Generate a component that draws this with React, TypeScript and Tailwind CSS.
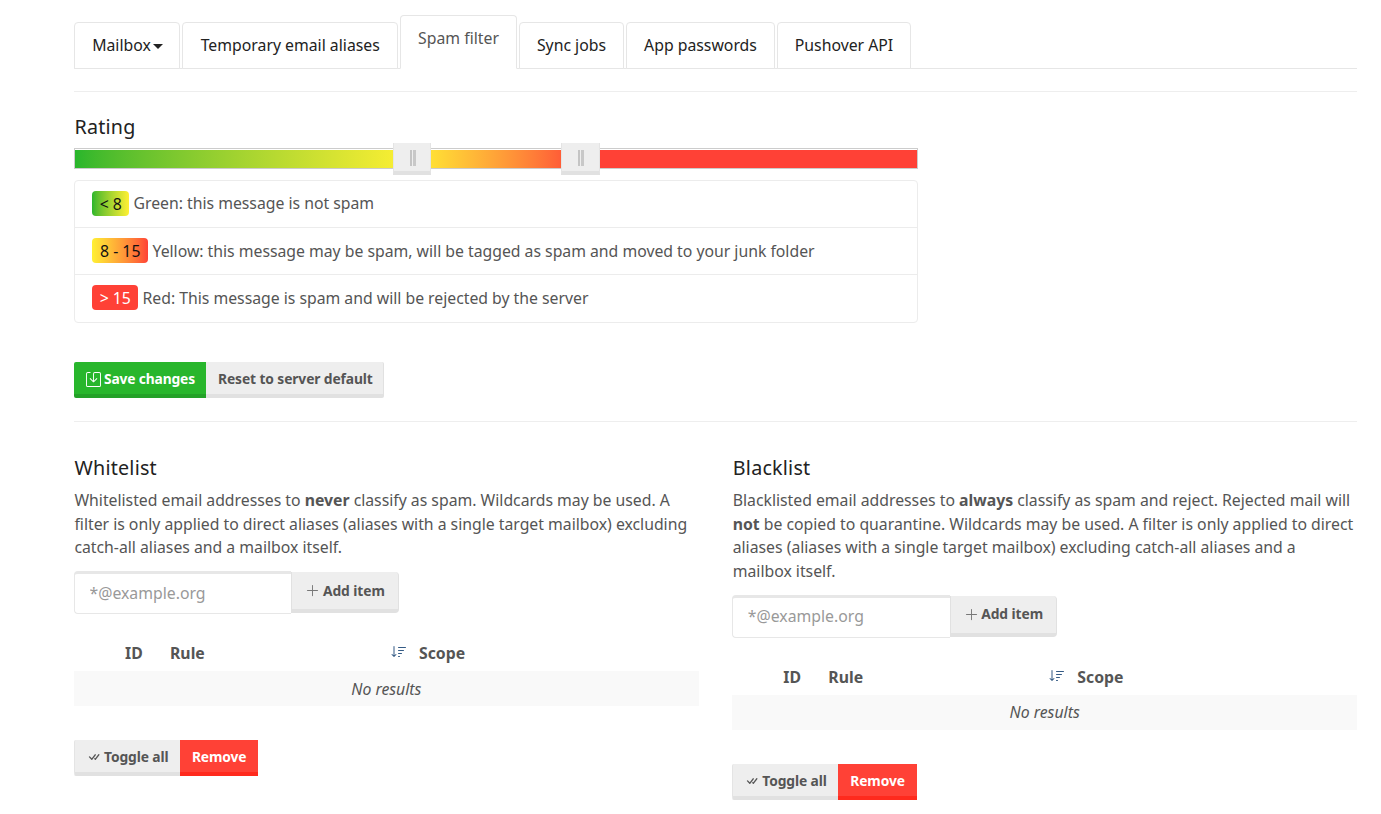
import React from "react";
import { BsCheckAll, BsPlusLg, BsSave, BsSortDown } from "react-icons/bs";

const tabs = [
  { label: "Mailbox", width: "w-[106px] pl-px", caret: true },
  { label: "Temporary email aliases", width: "ml-[2px] w-[216px] pl-[0.5px]" },
  { label: "Spam filter", width: "ml-[2px] w-[117px]", active: true },
  { label: "Sync jobs", width: "ml-[2px] w-[105px]" },
  { label: "App passwords", width: "ml-[2px] w-[149px]" },
  { label: "Pushover API", width: "ml-[2px] w-[134px]" },
];

function Tabs() {
  return (
    <nav className="flex h-[54px] items-end border-b border-[#e6e6e6]">
      {tabs.map((t) => (
        <button
          key={t.label}
          className={`${t.width} -mb-px flex shrink-0 items-start justify-center rounded-t-[4px] border bg-white pt-[10px] ${
            t.active
              ? "h-[54px] border-[#e6e6e6] border-b-white text-[#555]"
              : "h-[47px] border-[#e6e6e6] text-[#222]"
          }`}
        >
          {t.label}
          {t.caret && (
            <span className="ml-[2px] mt-[10.5px] border-x-[5px] border-t-[5px] border-x-transparent border-t-[#222]" />
          )}
        </button>
      ))}
    </nav>
  );
}

function Handle({ place }: { place: string }) {
  return (
    <div className={`absolute -top-[6px] ${place} flex h-8 border-x border-b-4 border-x-[#e4e4e4] border-b-[#e1e1e1] bg-[#eee] pl-[16px] pt-[7px]`}>
      <div className="flex h-4 w-[6px] gap-px">
        <span className="w-[2px] bg-[#c4c4c4]" />
        <span className="w-[3px] bg-[#c8c8c8]" />
      </div>
    </div>
  );
}

const ratings = [
  { range: "< 8", text: "Green: this message is not spam", row: "h-[46px]", tag: "w-[37px] bg-linear-to-r from-[#28b62c] to-[#fff033] text-[#111]" },
  { range: "8 - 15", text: "Yellow: this message may be spam, will be tagged as spam and moved to your junk folder", row: "h-[47px] border-t", tag: "w-[56px] bg-linear-to-r from-[#fff033] to-[#ff4136] text-[#111]" },
  { range: "> 15", text: "Red: This message is spam and will be rejected by the server", row: "h-[48px] border-t", tag: "w-[46px] bg-[#ff4136] text-white" },
];

function Rating() {
  return (
    <section className="w-[844px]">
      <h4 className="mt-[21px] h-[28px] pl-[0.5px] text-[19.7px] leading-[28px] tracking-[0.2px] text-[#222]">Rating</h4>
      <div className="relative mt-[7px] h-[21px] border border-[#ccc]">
        <div className="mt-px flex h-[18px]">
          <div className="w-[337px] bg-linear-to-r from-[#28b62c] to-[#fff033]" />
          <div className="w-[169px] bg-linear-to-r from-[#fff033] to-[#ff4136]" />
          <div className="flex-1 bg-[#ff4136]" />
        </div>
        <Handle place="left-[318px] w-[38px]" />
        <Handle place="left-[486px] w-[39px]" />
      </div>
      <ul className="mt-[11px] h-[143px] rounded-[4px] border border-[#ececec]">
        {ratings.map((r, i) => (
          <li key={r.range} className={`flex items-start border-[#ececec] pl-[17px] pt-[10px] ${r.row}`}>
            <span className={`${r.tag} mr-[4.5px] h-[25px] rounded-[4px] pl-[0.5px] text-center leading-[27px]`}>{r.range}</span>
            <span className={`leading-6 tracking-[-0.015px] ${i > 0 ? "pt-[0.5px]" : ""}`}>{r.text}</span>
          </li>
        ))}
      </ul>
    </section>
  );
}

const btn = "flex h-9 items-center border-b-4 pt-[2px] text-[13.8px] font-bold";
const grey = "border-b-[#e1e1e1] bg-[#eee] text-[#555]";

type ListProps = { title: string; children: React.ReactNode };

function FilterList({ title, children }: ListProps) {
  return (
    <section className="w-[624.7px]">
      <h4 className="h-[28px] pl-[0.5px] text-[19.7px] leading-[28px] tracking-[0.22px] text-[#222]">{title}</h4>
      <p className="mt-[6.9px] whitespace-nowrap pl-[0.4px] leading-[23.65px] tracking-[-0.01px]">{children}</p>
      <div className="mt-[11.2px] flex">
        <input
          className="h-[43px] w-[217.4px] rounded-l-[4px] border border-r-0 border-t-[3px] border-[#e7e7e7] pb-[2px] pl-[14.5px] text-[15.8px] outline-none placeholder:text-[#999]"
          placeholder="*@example.org"
        />
        <button className="mt-px flex h-[41px] w-[107.2px] items-center rounded-r-[4px] border border-b-4 border-t-0 border-[#e1e1e1] bg-[#eee] pl-[13px] text-[13.8px] font-bold tracking-[-0.06px] text-[#555]">
          <BsPlusLg className="mr-[2.5px] size-[15px] text-[#777]" />
          Add item
        </button>
      </div>
      <table className="mt-[21px] w-full table-fixed">
        <thead>
          <tr className="h-[36px] text-left font-semibold text-[#555]">
            <th className="w-[43px] p-0" />
            <th className="w-[45px] p-0 pl-[8px]">ID</th>
            <th className="w-[249px] p-0 pl-[8px]">
              <div className="flex items-center justify-between">
                Rule
                <BsSortDown className="mb-[2px] mr-[4.5px] size-[16px] text-[#345b85]" />
              </div>
            </th>
            <th className="p-0 pl-[8px]">Scope</th>
          </tr>
        </thead>
        <tbody>
          <tr className="h-[35px] bg-[#f9f9f9]">
            <td colSpan={4} className="p-0 pt-[0.5px] text-center italic">No results</td>
          </tr>
        </tbody>
      </table>
      <div className="mt-[34px] flex">
        <button className={`${btn} ${grey} w-[106px] rounded-l-[2px] border-l border-l-[#e4e4e4] pl-[12px] tracking-[-0.1px]`}>
          <BsCheckAll className="mr-[3px] size-[14px]" />
          Toggle all
        </button>
        <button className={`${btn} w-[78.4px] justify-center border-b-[#ff2a1d] bg-[#ff4136] tracking-[-0.1px] text-white`}>Remove</button>
      </div>
    </section>
  );
}

export default function App() {
  return (
    <main className="h-[814px] w-[1381px] overflow-hidden bg-white pl-[74px] pr-6 pt-[15px] font-['Noto_Sans',sans-serif] text-[15.8px] leading-6 text-[#555]">
      <Tabs />
      <div className="mt-[22px] h-px bg-[#eee]" />
      <Rating />
      <div className="mt-[39px] flex">
        <button className={`${btn} w-[132px] rounded-l-[2px] border-b-[#23a127] bg-[#28b62c] pl-3 tracking-[-0.15px] text-white`}>
          <BsSave className="mr-[3px] size-[15px]" />
          Save changes
        </button>
        <button className={`${btn} ${grey} w-[178px] rounded-r-[2px] border-r border-r-[#e1e1e1] pl-3 tracking-[-0.1px]`}>Reset to server default</button>
      </div>
      <div className="mt-[23px] h-px bg-[#eee]" />
      <div className="mt-[32px] flex justify-between">
        <FilterList title="Whitelist">
          Whitelisted email addresses to <b>never</b> classify as spam. Wildcards may be used. A<br />
          filter is only applied to direct aliases (aliases with a single target mailbox) excluding<br />
          catch-all aliases and a mailbox itself.
        </FilterList>
        <FilterList title="Blacklist">
          Blacklisted email addresses to <b>always</b> classify as spam and reject. Rejected mail will<br />
          <b>not</b> be copied to quarantine. Wildcards may be used. A filter is only applied to direct<br />
          aliases (aliases with a single target mailbox) excluding catch-all aliases and a<br />
          mailbox itself.
        </FilterList>
      </div>
    </main>
  );
}
